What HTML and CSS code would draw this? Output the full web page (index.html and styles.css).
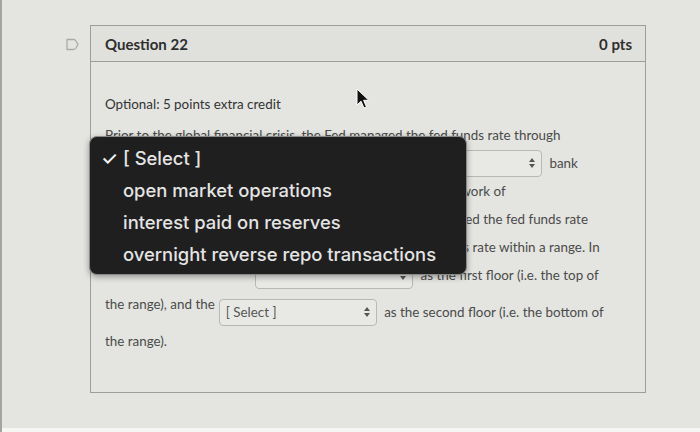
FILE: index.html
```html
<!DOCTYPE html>
<html lang="en">

<head>
    <meta charset="UTF-8">
    <meta name="viewport" content="width=device-width, initial-scale=1.0">
    <title>Question 22</title>
    <link rel="stylesheet" href="styles.css">
</head>

<body>
    <div class="screen">
        <div class="question-row">
            <svg class="flag" width="13" height="13" viewBox="0 0 13 13">
                <path d="M1 1.5 H7.5 Q9 1.5 10 3 L12 6.5 L10 10 Q9 11.5 7.5 11.5 H1 Z" fill="none" stroke="#a9aba8" stroke-width="1.3" stroke-linejoin="round"/>
            </svg>

            <div class="question">
                <div class="question-header">
                    <span class="question-title">Question 22</span>
                    <span class="question-points">0 pts</span>
                </div>
                <div class="question-body">
                    <p class="intro">Optional: 5 points extra credit</p>
                    <div class="text">
                        <div class="line">Prior to the global financial crisis, the Fed managed the fed funds rate through</div>
                        <div class="line">small changes in the quantity of reserves, using
                            <span class="select"><span class="select-label"></span>
                                <svg class="arrows" width="6" height="10" viewBox="0 0 6 10"><path d="M3 0 L6 4 H0 Z M0 6 H6 L3 10 Z" fill="#555"/></svg>
                            </span> bank</div>
                        <div class="line">reserves. After the crisis, the Fed shifted over to a new framework of</div>
                        <div class="line">abundant, ample reserves, in which it no longer directly targeted the fed funds rate</div>
                        <div class="line">but instead set a target range and aimed to keep the fed funds rate within a range. In</div>
                        <div class="line">this system, the Fed uses
                            <span class="select"><span class="select-label"></span>
                                <svg class="arrows" width="6" height="10" viewBox="0 0 6 10"><path d="M3 0 L6 4 H0 Z M0 6 H6 L3 10 Z" fill="#555"/></svg>
                            </span> as the first floor (i.e. the top of</div>
                        <div class="line spaced">the range), and the
                            <span class="select"><span class="select-label">[ Select ]</span>
                                <svg class="arrows" width="6" height="10" viewBox="0 0 6 10"><path d="M3 0 L6 4 H0 Z M0 6 H6 L3 10 Z" fill="#555"/></svg>
                            </span> as the second floor (i.e. the bottom of</div>
                        <div class="line">the range).</div>
                    </div>
                </div>
            </div>
        </div>

        <!-- native select menu that is open over the text -->
        <ul class="menu">
            <li class="menu-item checked"><span class="check">✓</span>[ Select ]</li>
            <li class="menu-item">open market operations</li>
            <li class="menu-item">interest paid on reserves</li>
            <li class="menu-item">overnight reverse repo transactions</li>
        </ul>

        <svg class="cursor" width="14" height="22" viewBox="0 0 14 22">
            <path d="M1 1 L1 17 L5 13.2 L8 20 L10.5 19 L7.6 12.3 L12.8 12.3 Z" fill="#111" stroke="#fff" stroke-width="1" stroke-linejoin="round"/>
        </svg>

        <div class="bottom-strip"></div>
    </div>
</body>

</html>
```

FILE: styles.css
```css
body {
    margin: 0;
    padding: 0;
    font-family: Lato, "Open Sans", sans-serif;
    background-color: #e4e5e1;
}

.screen {
    position: relative;
    width: 700px;
    height: 432px;
    overflow: hidden;
    background-color: #e4e5e1;
    border-left: 2px solid #a3a5a1;
    box-sizing: border-box;
}

.question-row {
    display: flex;
    align-items: flex-start;
    padding: 25px 0 0 64px;
}

.flag {
    margin-top: 13px;
    margin-right: 11px;
}

.question {
    width: 556px;
    border: 1px solid #9c9e9a;
    box-sizing: border-box;
}

.question-header {
    display: flex;
    justify-content: space-between;
    align-items: center;
    height: 35px;
    padding: 0 13px 0 14px;
    background-color: #e0e1dd;
    border-bottom: 1px solid #9c9e9a;
}

.question-title,
.question-points {
    font-size: 15px;
    font-weight: 700;
    color: #2e2f2d;
}

.question-body {
    padding: 32px 14px 37px;
}

.intro {
    margin: 0 0 7px;
    font-size: 13.4px;
    line-height: 20px;
    color: #333;
}

.text {
    font-size: 13.4px;
    color: #4a4b49;
}

.line {
    display: flex;
    align-items: center;
    height: 28px;
    white-space: pre;
}

.line.spaced {
    height: 38px;
    padding-top: 8px;
    box-sizing: border-box;
}

.select {
    display: inline-flex;
    align-items: center;
    justify-content: space-between;
    width: 158px;
    height: 27px;
    margin: 0 4px 0 4px;
    padding: 0 6px 0 6px;
    box-sizing: border-box;
    border: 1px solid #b7b9b5;
    border-radius: 4px;
    background-color: #e8e9e5;
    color: #555;
}

.menu {
    position: absolute;
    left: 87px;
    top: 136px;
    width: 378px;
    height: 139px;
    margin: 0;
    padding: 5px 0 0;
    box-sizing: border-box;
    list-style: none;
    background-color: #1f1f1f;
    border: 1px solid #8a8a88;
    border-radius: 8px;
    box-shadow: 0 2px 6px rgba(0, 0, 0, 0.35);
    font-family: Inter, "Open Sans", sans-serif;
    font-size: 18.4px;
    font-weight: 500;
    color: #e4e4e4;
}

.menu-item {
    display: flex;
    align-items: center;
    height: 32px;
    padding-left: 33px;
}

.check {
    width: 22px;
    margin-left: -22px;
    color: #f2f2f2;
    font-size: 19px;
}

.cursor {
    position: absolute;
    left: 354px;
    top: 88px;
}

.bottom-strip {
    position: absolute;
    left: 0;
    right: 0;
    bottom: 0;
    height: 4px;
    background-color: #f6f6f4;
}
```
